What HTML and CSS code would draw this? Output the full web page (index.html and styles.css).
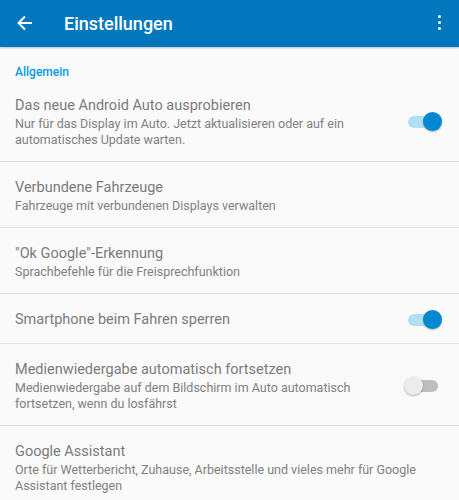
FILE: index.html
```html
<!DOCTYPE html>
<html lang="de">
<head>
    <meta charset="UTF-8">
    <meta name="viewport" content="width=device-width, initial-scale=1.0">
    <title>Einstellungen</title>
    <link rel="stylesheet" href="styles.css">
</head>
<body>
    <header class="toolbar">
        <svg class="toolbar-back" width="16" height="16" viewBox="0 0 16 16">
            <path d="M15 8H2M8 1.5L1.5 8 8 14.5" fill="none" stroke="#fff" stroke-width="2"/>
        </svg>
        <h1 class="toolbar-title">Einstellungen</h1>
        <div class="toolbar-menu">
            <span></span><span></span><span></span>
        </div>
    </header>

    <main>
        <div class="category">Allgemein</div>

        <div class="pref">
            <div class="pref-text">
                <div class="pref-title">Das neue Android Auto ausprobieren</div>
                <div class="pref-summary">Nur für das Display im Auto. Jetzt aktualisieren oder auf ein automatisches Update warten.</div>
            </div>
            <div class="switch on"><span class="track"></span><span class="thumb"></span></div>
        </div>

        <div class="pref">
            <div class="pref-text">
                <div class="pref-title">Verbundene Fahrzeuge</div>
                <div class="pref-summary">Fahrzeuge mit verbundenen Displays verwalten</div>
            </div>
        </div>

        <div class="pref">
            <div class="pref-text">
                <div class="pref-title">"Ok Google"-Erkennung</div>
                <div class="pref-summary">Sprachbefehle für die Freisprechfunktion</div>
            </div>
        </div>

        <div class="pref pref-single">
            <div class="pref-text">
                <div class="pref-title">Smartphone beim Fahren sperren</div>
            </div>
            <div class="switch on"><span class="track"></span><span class="thumb"></span></div>
        </div>

        <div class="pref">
            <div class="pref-text">
                <div class="pref-title">Medienwiedergabe automatisch fortsetzen</div>
                <div class="pref-summary">Medienwiedergabe auf dem Bildschirm im Auto automatisch fortsetzen, wenn du losfährst</div>
            </div>
            <div class="switch"><span class="track"></span><span class="thumb"></span></div>
        </div>

        <div class="pref">
            <div class="pref-text">
                <div class="pref-title">Google Assistant</div>
                <div class="pref-summary">Orte für Wetterbericht, Zuhause, Arbeitsstelle und vieles mehr für Google Assistant festlegen</div>
            </div>
        </div>
    </main>
</body>
</html>
```

FILE: styles.css
```css
body {
    font-family: Roboto, "Noto Sans", sans-serif;
    margin: 0;
    padding: 0;
    background-color: #fafafa;
    color: #7b7b7b;
}

/* barre du haut */
.toolbar {
    display: flex;
    align-items: center;
    height: 47px;
    background-color: #0277bd;
    color: white;
    padding: 0 0 0 17px;
    box-shadow: 0 1px 2px rgba(0, 0, 0, 0.25);
}
.toolbar-back {
    flex: none;
    margin-top: -1px;
}
.toolbar-title {
    flex: 1;
    margin: 0 0 0 31px;
    font-size: 18px;
    font-weight: 500;
    line-height: 24px;
}
.toolbar-menu {
    display: flex;
    flex-direction: column;
    gap: 2.5px;
    padding: 0 18px;
    margin-top: -2px;
}
.toolbar-menu span {
    width: 3.5px;
    height: 3.5px;
    border-radius: 50%;
    background: white;
}

/* liste des réglages */
.category {
    padding: 17px 15px 0;
    line-height: 16px;
    font-size: 12px;
    font-weight: 500;
    color: #039be5;
}
.pref {
    display: flex;
    align-items: center;
    padding: 16px 17px 13px 15px;
    border-bottom: 1px solid #e2e2e2;
}
.pref-single {
    padding-bottom: 13px;
}
.pref-text {
    flex: 1;
    min-width: 0;
}
.pref-title {
    font-size: 14.5px;
    line-height: 20px;
    color: #7b7b7b;
}
.pref-summary {
    font-size: 12.5px;
    line-height: 16px;
    color: #808080;
}

/* interrupteur */
.switch {
    position: relative;
    flex: none;
    width: 38px;
    height: 20px;
    margin-left: 8px;
}
.switch .track {
    position: absolute;
    left: 4px;
    top: 4px;
    width: 30px;
    height: 12px;
    border-radius: 6px;
    background: #bdbdbd;
}
.switch .thumb {
    position: absolute;
    left: 0;
    top: 0;
    width: 19px;
    height: 19px;
    border-radius: 50%;
    background: #ececec;
    box-shadow: 0 1px 2px rgba(0, 0, 0, 0.3);
}
.switch.on .track {
    background: #b3dff5;
}
.switch.on .thumb {
    left: 19px;
    background: #0288d1;
}
```
